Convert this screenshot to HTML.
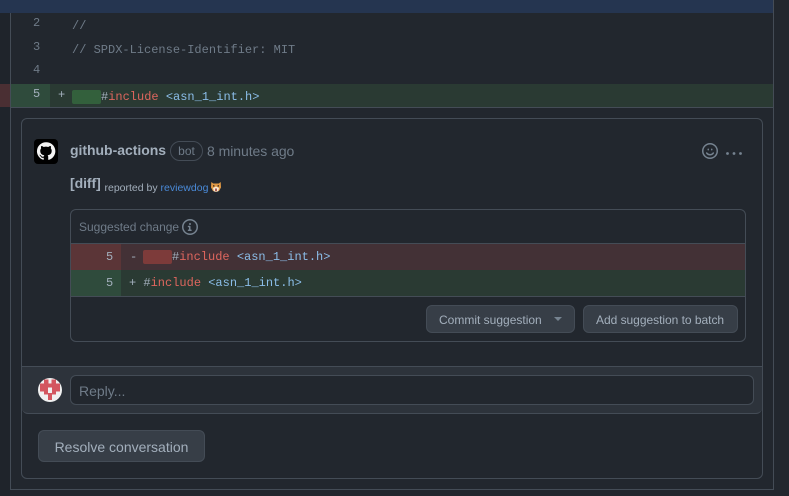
<!DOCTYPE html>
<html><head><meta charset="utf-8">
<style>
html,body{margin:0;padding:0;width:789px;height:496px;overflow:hidden;background:#22272e;font-family:"Liberation Sans",sans-serif;}
.a{position:absolute;box-sizing:border-box;}
.t{position:absolute;white-space:pre;line-height:16px;}
.m{font-family:"Liberation Mono",monospace;font-size:12px;color:#a3afbc;}
.c{color:#6f7b88}.r{color:#de665e}.b{color:#8bbde8}
.n{font-family:"Liberation Mono",monospace;font-size:12px;color:#6f7b88;}
.btn{position:absolute;box-sizing:border-box;background:#373e47;border:1px solid #444c56;border-radius:6px;color:#a3afbc;}
</style></head>
<body>
<div class="a" style="left:0;top:0;width:10px;height:496px;background:#1f242b"></div>
<div class="a" style="left:10px;top:0;width:764px;height:490px;border-left:1px solid #444c56;border-right:1px solid #444c56;border-bottom:1px solid #444c56"></div>
<div class="a" style="left:0;top:0;width:773px;height:13px;background:#253550"></div>

<div class="t n" style="left:33px;top:15px">2</div>
<div class="t m c" style="left:72px;top:18px">//</div>
<div class="t n" style="left:33px;top:39px">3</div>
<div class="t m c" style="left:72px;top:41.500px">// SPDX-License-Identifier: MIT</div>
<div class="t n" style="left:33px;top:62px">4</div>

<div class="a" style="left:0;top:84px;width:10px;height:23px;background:#4a2f33"></div>
<div class="a" style="left:11px;top:84px;width:39px;height:23px;background:#2f4b3c"></div>
<div class="a" style="left:50px;top:84px;width:723px;height:23px;background:#2a3a33"></div>
<div class="a" style="left:11px;top:107px;width:762px;height:1px;background:#444c56"></div>
<div class="t n" style="left:33px;top:86px;color:#a3afbc">5</div>
<div class="t m" style="left:58px;top:87px">+</div>
<div class="a" style="left:72px;top:90px;width:29px;height:14px;background:#33603c;border-radius:2px"></div>
<div class="t m" style="left:101px;top:89px">#<span class="r">include</span> <span class="b">&lt;asn_1_int.h&gt;</span></div>

<div class="a" style="left:21px;top:118px;width:742px;height:361px;border:1px solid #444c56;border-radius:6px"></div>

<svg class="a" style="left:34px;top:139px" width="24" height="25" viewBox="0 0 24 25">
<rect width="24" height="25" rx="4" fill="#000"/>
<path d="M12 3.200a9 9 0 0 0-2.850 17.550c.45.080.6-.2.6-.43v-1.600c-2.500.55-3.030-1.060-3.030-1.060-.41-1.040-1-1.320-1-1.320-.82-.56.060-.55.060-.55.9.070 1.380.93 1.380.93.8 1.370 2.100.97 2.620.74.080-.58.31-.97.57-1.200-2-.23-4.100-1-4.100-4.450 0-.98.35-1.780.93-2.410-.1-.23-.4-1.140.080-2.380 0 0 .75-.24 2.470.92a8.600 8.600 0 0 1 4.500 0c1.720-1.160 2.470-.92 2.470-.92.49 1.240.18 2.150.090 2.380.57.63.92 1.430.92 2.410 0 3.460-2.100 4.220-4.100 4.440.32.28.61.83.61 1.670v2.490c0 .24.15.52.61.43A9 9 0 0 0 12 3.200z" fill="#f4f4f4"/>
</svg>

<div class="t" style="left:70px;top:142px;font-size:14px;font-weight:bold;letter-spacing:-.03px;color:#a3afbc">github-actions</div>
<div class="a" style="left:170px;top:141px;width:33px;height:20px;border:1px solid #444c56;border-radius:10px;font-size:12px;line-height:19px;text-align:center;color:#6f7b88">bot</div>
<div class="t" style="left:207px;top:143px;font-size:14px;letter-spacing:-.05px;color:#6f7b88">8 minutes ago</div>

<svg class="a" style="left:702px;top:143px" width="16" height="16" viewBox="0 0 16 16" fill="#768390"><path d="M8 0a8 8 0 1 1 0 16A8 8 0 0 1 8 0zM1.500 8a6.500 6.500 0 1 0 13 0 6.500 6.500 0 0 0-13 0zm3.820 1.640A3.250 3.250 0 0 0 8 11c1.100 0 2.100-.55 2.680-1.360a.75.75 0 1 1 1.220.87A4.750 4.750 0 0 1 8 12.500a4.750 4.750 0 0 1-3.900-1.990.75.75 0 1 1 1.220-.87zM7 6.500c0 .55-.34 1-.75 1s-.75-.45-.75-1 .34-1 .75-1 .75.45.75 1zm3.500 0c0 .55-.34 1-.75 1S9 7.050 9 6.500s.34-1 .75-1 .75.45.75 1z"/></svg>
<svg class="a" style="left:725px;top:150px" width="18" height="6" viewBox="0 0 18 6" fill="#768390"><circle cx="2.500" cy="3.500" r="1.400"/><circle cx="9" cy="3.500" r="1.400"/><circle cx="15.500" cy="3.500" r="1.400"/></svg>

<div class="t" style="left:70px;top:175px;font-size:14px;font-weight:bold;letter-spacing:-.06px;color:#a3afbc">[diff]</div>
<div class="t" style="left:104.500px;top:180px;font-size:10.500px;color:#a3afbc">reported by <span style="color:#4a8ad8">reviewdog</span></div>
<svg class="a" style="left:211px;top:182px" width="10" height="10" viewBox="0 0 10 10">
<path d="M.3 0l2 1.500h5.400l2-1.500.3 5.500L8 9l-3 1-3-1L0 5.500z" fill="#e29a45"/><path d="M2 6l3-1.500L8 6 7 9.500H3z" fill="#f6ead8"/><rect x="2" y="3.200" width="1.400" height="1.400" fill="#3a2a20"/><rect x="6.600" y="3.200" width="1.400" height="1.400" fill="#3a2a20"/><rect x="4" y="6.500" width="2" height="2.500" fill="#a85a55"/></svg>

<div class="a" style="left:70px;top:209px;width:676px;height:133px;border:1px solid #444c56;border-radius:6px"></div>
<div class="t" style="left:79px;top:219px;font-size:12px;color:#6f7b88">Suggested change</div>
<svg class="a" style="left:182px;top:219px" width="16" height="16" viewBox="0 0 16 16" fill="#768390"><path d="M8 0a8 8 0 1 1 0 16A8 8 0 0 1 8 0zM1.500 8a6.500 6.500 0 1 0 13 0 6.500 6.500 0 0 0-13 0zm5-1.250h1.250a.75.75 0 0 1 .75.75v3h.5a.75.75 0 0 1 0 1.500h-2.500a.75.75 0 0 1 0-1.500h.5V8.250h-.5a.75.75 0 0 1 0-1.500zM8 6a1 1 0 1 1 0-2 1 1 0 0 1 0 2z"/></svg>

<div class="a" style="left:71px;top:243px;width:674px;height:1px;background:#444c56"></div>
<div class="a" style="left:71px;top:244px;width:50px;height:26px;background:#5b3537"></div>
<div class="a" style="left:121px;top:244px;width:624px;height:26px;background:#433136"></div>
<div class="a" style="left:71px;top:270px;width:50px;height:26px;background:#2f4b3c"></div>
<div class="a" style="left:121px;top:270px;width:624px;height:26px;background:#2a3a33"></div>
<div class="a" style="left:71px;top:296px;width:674px;height:1px;background:#444c56"></div>

<div class="t n" style="left:106px;top:249px;color:#a3afbc">5</div>
<div class="t m" style="left:130px;top:249px">-</div>
<div class="a" style="left:143px;top:250px;width:29px;height:14px;background:#7d3b3a;border-radius:2px"></div>
<div class="t m" style="left:172px;top:249px">#<span class="r">include</span> <span class="b">&lt;asn_1_int.h&gt;</span></div>
<div class="t n" style="left:106px;top:275px;color:#a3afbc">5</div>
<div class="t m" style="left:129px;top:275px">+ #<span class="r">include</span> <span class="b">&lt;asn_1_int.h&gt;</span></div>

<div class="btn" style="left:426px;top:305px;width:149px;height:28px;font-size:12px;line-height:28px;padding-left:12px">Commit suggestion</div>
<div class="a" style="left:554px;top:317px;width:0;height:0;border-left:4px solid transparent;border-right:4px solid transparent;border-top:4px solid #768390"></div>
<div class="btn" style="left:583px;top:305px;width:155px;height:28px;font-size:12px;line-height:28px;padding-left:12px;letter-spacing:-.03px">Add suggestion to batch</div>

<div class="a" style="left:22px;top:366px;width:740px;height:48px;background:#2d333b;border-top:1px solid #444c56;border-bottom:1px solid #444c56;border-radius:0 0 6px 6px"></div>
<svg class="a" style="left:38px;top:378px" width="24" height="24" viewBox="0 0 24 24">
<circle cx="12" cy="12" r="12" fill="#f0f0f0"/>
<g fill="#d3565f">
<rect x="6" y="1.500" width="4.500" height="4"/><rect x="13.500" y="1.500" width="4.500" height="4"/>
<rect x="2" y="5.500" width="4" height="4"/><rect x="6" y="5.500" width="12" height="4"/><rect x="18" y="5.500" width="4" height="4"/>
<rect x="2" y="9.500" width="8" height="4"/><rect x="14" y="9.500" width="8" height="4"/>
<rect x="6" y="13.500" width="4" height="3"/><rect x="14" y="13.500" width="4" height="3"/><rect x="10" y="13.500" width="4" height="0"/>
<rect x="10" y="15" width="4" height="3.500"/>
<rect x="10" y="18.500" width="4" height="3.500"/>
</g>
</svg>
<div class="a" style="left:70px;top:375px;width:684px;height:30px;background:#22272e;border:1px solid #444c56;border-radius:6px"></div>
<div class="t" style="left:79px;top:383px;font-size:14px;color:#6f7b88">Reply...</div>

<div class="btn" style="left:38px;top:430px;width:167px;height:32px;font-size:14px;line-height:32px;text-align:center">Resolve conversation</div>
</body></html>
